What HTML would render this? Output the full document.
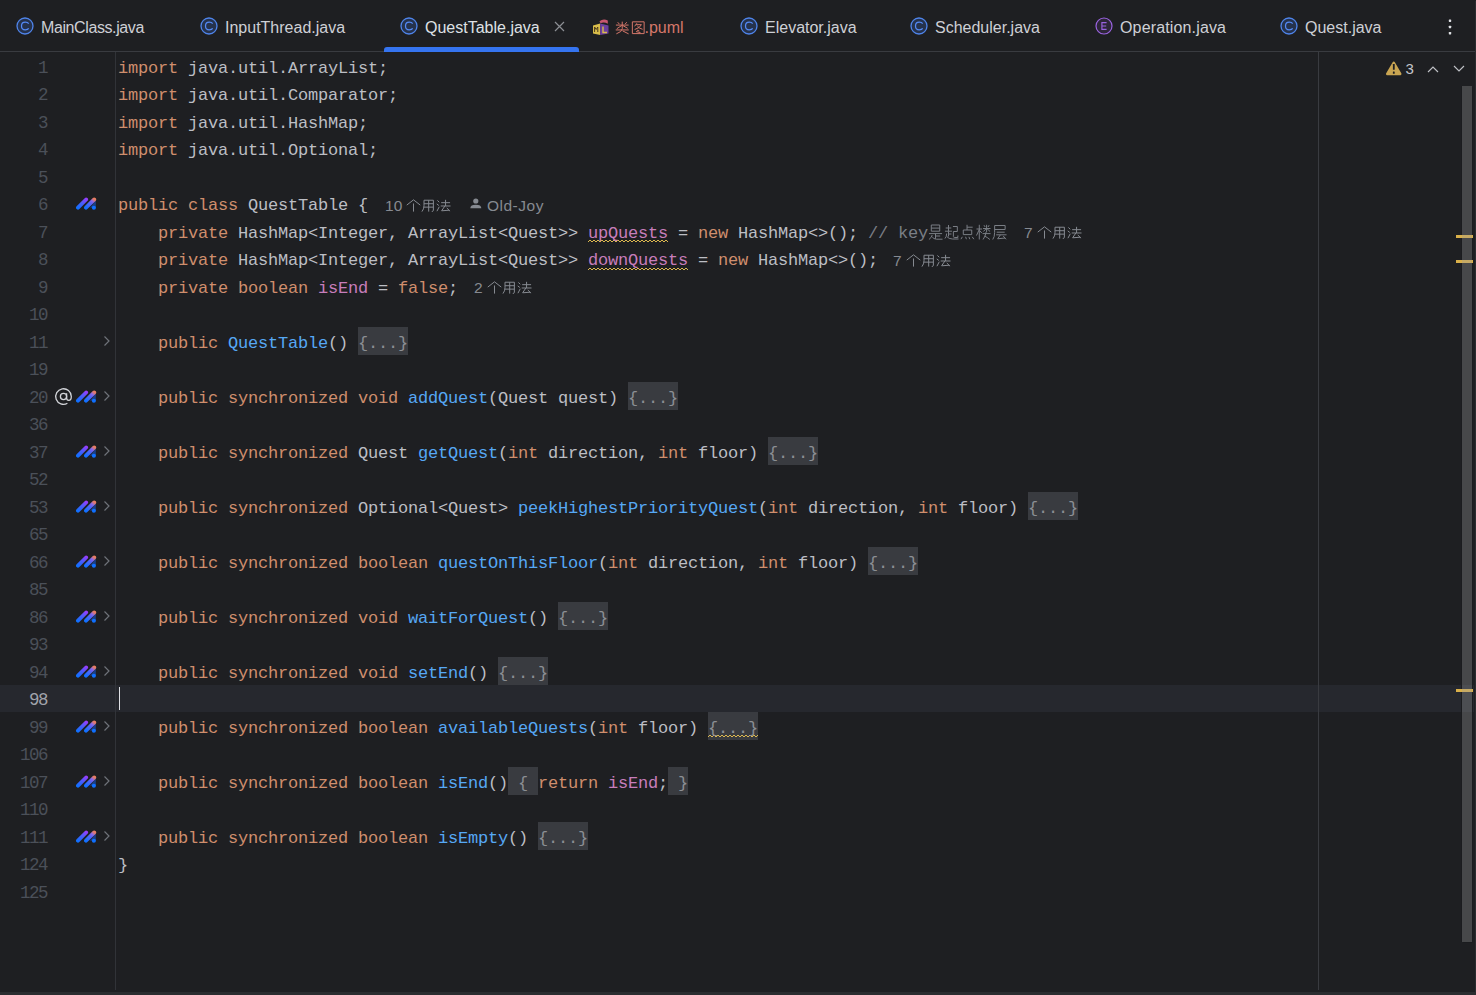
<!DOCTYPE html>
<html><head><meta charset="utf-8">
<style>
html,body{margin:0;padding:0;}
body{width:1476px;height:995px;overflow:hidden;background:#1e1f22;position:relative;font-family:"Liberation Sans",sans-serif;}
.tabs{position:absolute;left:0;top:0;width:1476px;height:51px;background:#1e1f22;}
.tabline{position:absolute;left:0;top:51px;width:1476px;height:1px;background:#393b40;}
.tab{position:absolute;top:17.5px;height:20px;font-size:16px;letter-spacing:0;line-height:20px;color:#ced0d6;white-space:nowrap;}
.tab.sel{color:#dfe1e5;}
.ic{position:absolute;top:17px;width:18px;height:18px;}
.uline{position:absolute;left:384px;top:47px;width:195px;height:5px;background:#3574f0;border-radius:3px 3px 0 0;}
.close{position:absolute;left:553.5px;top:20.7px;}
.kebab{position:absolute;left:1448px;top:18.5px;}
.gsep{position:absolute;left:115px;top:52px;width:1px;height:938px;background:#313338;}
.rmargin{position:absolute;left:1318px;top:52px;width:1px;height:938px;background:#393b40;}
.curline{position:absolute;left:0;top:684.5px;width:1474px;height:27.5px;background:#26282e;}
.ln{position:absolute;left:0;width:47px;height:27.5px;text-align:right;font-family:"Liberation Mono",monospace;font-size:17.5px;line-height:27.5px;color:#4b5059;margin-top:2.5px;}
.ln.cur{color:#a1a3ab;}
.ai{position:absolute;left:75px;}
.fa{position:absolute;left:103px;}
.at{position:absolute;left:54px;}
.code{position:absolute;left:118px;height:27.5px;white-space:pre;font-family:"Liberation Mono",monospace;font-size:17px;letter-spacing:-0.2px;line-height:27.5px;color:#bcbec4;margin-top:2.6px;}
.code i{font-style:normal;display:inline-block;width:10px;}
.ln i{font-style:normal;display:inline-block;width:9px;}
.fbox{position:absolute;height:27.5px;background:#393b40;}
.sq{position:absolute;}
.fd{color:#8c8f94;}
.k{color:#cf8e6d;}
.f{color:#56a8f5;}
.v{color:#c77dbb;}
.c{color:#7a7e85;}
.hint{position:absolute;font-size:15.5px;letter-spacing:0.2px;line-height:20px;margin-top:0.8px;color:#868a91;white-space:nowrap;}
.sbar{position:absolute;left:1462px;top:86px;width:10px;height:856px;background:rgba(158,158,160,0.32);}
.mark{position:absolute;left:1456px;width:17px;height:3px;background:#d9b04a;}
.bottom{position:absolute;left:0;top:992px;width:1476px;height:3px;background:#2b2d30;}
.redge{position:absolute;left:1475px;top:1px;width:1px;height:991px;background:#2b2d30;}
.caret{position:absolute;left:119px;top:687px;width:1px;height:23px;background:#dfe1e5;}
</style></head><body>
<svg width="0" height="0" style="position:absolute"><defs><linearGradient id="g1" gradientUnits="userSpaceOnUse" x1="3" y1="12.5" x2="11.2" y2="2"><stop offset="0" stop-color="#0f70ff"/><stop offset="0.5" stop-color="#4a5cfb"/><stop offset="1" stop-color="#9a3cfe"/></linearGradient><linearGradient id="g2" gradientUnits="userSpaceOnUse" x1="11" y1="12.5" x2="19.3" y2="2"><stop offset="0" stop-color="#0f70ff"/><stop offset="0.55" stop-color="#5f64f8"/><stop offset="0.72" stop-color="#8a6ae8"/><stop offset="0.86" stop-color="#d5787e"/><stop offset="1" stop-color="#ee7f5a"/></linearGradient></defs></svg>
<div class="tabs"></div>
<div class="tabline"></div>
<div class="uline"></div>

<!-- tab icons -->
<svg class="ic" style="left:16px" viewBox="0 0 18 18"><circle cx="9" cy="9" r="8" fill="#25324d" stroke="#4f84ea" stroke-width="1.3"/><path d="M12.7 6.6 C12 5.6 11 5.2 9.3 5.2 C7 5.2 5.5 6.8 5.5 9 C5.5 11.2 7 12.8 9.3 12.8 C11 12.8 12 12.4 12.7 11.4" fill="none" stroke="#548af7" stroke-width="1.25"/></svg>
<div class="tab" style="left:41px;letter-spacing:-0.4px">MainClass.java</div>
<svg class="ic" style="left:200px" viewBox="0 0 18 18"><circle cx="9" cy="9" r="8" fill="#25324d" stroke="#4f84ea" stroke-width="1.3"/><path d="M12.7 6.6 C12 5.6 11 5.2 9.3 5.2 C7 5.2 5.5 6.8 5.5 9 C5.5 11.2 7 12.8 9.3 12.8 C11 12.8 12 12.4 12.7 11.4" fill="none" stroke="#548af7" stroke-width="1.25"/></svg>
<div class="tab" style="left:225px">InputThread.java</div>
<svg class="ic" style="left:400px" viewBox="0 0 18 18"><circle cx="9" cy="9" r="8" fill="#25324d" stroke="#4f84ea" stroke-width="1.3"/><path d="M12.7 6.6 C12 5.6 11 5.2 9.3 5.2 C7 5.2 5.5 6.8 5.5 9 C5.5 11.2 7 12.8 9.3 12.8 C11 12.8 12 12.4 12.7 11.4" fill="none" stroke="#548af7" stroke-width="1.25"/></svg>
<div class="tab sel" style="left:425px">QuestTable.java</div>
<svg class="close" width="11" height="11" viewBox="0 0 11 11"><path d="M1 1 L10 10 M10 1 L1 10" stroke="#8c8f94" stroke-width="1.2"/></svg>
<svg class="ic" style="left:592px;top:18px" viewBox="0 0 18 18"><path d="M1 7.5 L8.2 5.5 L8.2 17 L1 15.5 Z" fill="#d9bd4a"/><path d="M8.2 5.5 L16.5 7.5 L16.5 15.5 L8.2 17 Z" fill="#6b3f9e"/><path d="M2.6 14 V9 L4.2 11.5 L5.8 9 V14" fill="none" stroke="#4a3a1a" stroke-width="1"/><path d="M11 8.5 V14.5 H15" fill="none" stroke="#d9bd4a" stroke-width="1.4"/><path d="M7.5 3.2 Q11.5 0.3 15.8 2.6 L15.8 5.8 Q12 3.3 8.5 5.2 Z" fill="#c8566e"/></svg>
<div class="tab" style="left:644.5px;color:#d5776a">.puml</div>
<svg class="ic" style="left:740px" viewBox="0 0 18 18"><circle cx="9" cy="9" r="8" fill="#25324d" stroke="#4f84ea" stroke-width="1.3"/><path d="M12.7 6.6 C12 5.6 11 5.2 9.3 5.2 C7 5.2 5.5 6.8 5.5 9 C5.5 11.2 7 12.8 9.3 12.8 C11 12.8 12 12.4 12.7 11.4" fill="none" stroke="#548af7" stroke-width="1.25"/></svg>
<div class="tab" style="left:765px">Elevator.java</div>
<svg class="ic" style="left:910px" viewBox="0 0 18 18"><circle cx="9" cy="9" r="8" fill="#25324d" stroke="#4f84ea" stroke-width="1.3"/><path d="M12.7 6.6 C12 5.6 11 5.2 9.3 5.2 C7 5.2 5.5 6.8 5.5 9 C5.5 11.2 7 12.8 9.3 12.8 C11 12.8 12 12.4 12.7 11.4" fill="none" stroke="#548af7" stroke-width="1.25"/></svg>
<div class="tab" style="left:935px">Scheduler.java</div>
<svg class="ic" style="left:1095px" viewBox="0 0 18 18"><circle cx="9" cy="9" r="8" fill="#2d2638" stroke="#9a63e0" stroke-width="1.2"/><path d="M11.6 5.6 L6.9 5.6 L6.9 12.4 L11.6 12.4 M6.9 9 L11.2 9" fill="none" stroke="#9a63e0" stroke-width="1.15"/></svg>
<div class="tab" style="left:1120px;letter-spacing:0.15px">Operation.java</div>
<svg class="ic" style="left:1280px" viewBox="0 0 18 18"><circle cx="9" cy="9" r="8" fill="#25324d" stroke="#4f84ea" stroke-width="1.3"/><path d="M12.7 6.6 C12 5.6 11 5.2 9.3 5.2 C7 5.2 5.5 6.8 5.5 9 C5.5 11.2 7 12.8 9.3 12.8 C11 12.8 12 12.4 12.7 11.4" fill="none" stroke="#548af7" stroke-width="1.25"/></svg>
<div class="tab" style="left:1305px">Quest.java</div>
<svg class="kebab" width="4" height="18" viewBox="0 0 4 18"><rect x="0.8" y="0.5" width="2.4" height="2.4" rx="0.6" fill="#dfe1e5"/><rect x="0.8" y="6.75" width="2.4" height="2.4" rx="0.6" fill="#dfe1e5"/><rect x="0.8" y="13" width="2.4" height="2.4" rx="0.6" fill="#dfe1e5"/></svg>

<div class="curline"></div>
<div class="gsep"></div>
<div class="rmargin"></div>
<div class="caret"></div>

<div class="ln" style="top:52.00px"><i>1</i></div>
<div class="code" style="top:52.00px"><span class="k"><i>i</i><i>m</i><i>p</i><i>o</i><i>r</i><i>t</i></span><span class="d"><i> </i><i>j</i><i>a</i><i>v</i><i>a</i><i>.</i><i>u</i><i>t</i><i>i</i><i>l</i><i>.</i><i>A</i><i>r</i><i>r</i><i>a</i><i>y</i><i>L</i><i>i</i><i>s</i><i>t</i><i>;</i></span></div>
<div class="ln" style="top:79.50px"><i>2</i></div>
<div class="code" style="top:79.50px"><span class="k"><i>i</i><i>m</i><i>p</i><i>o</i><i>r</i><i>t</i></span><span class="d"><i> </i><i>j</i><i>a</i><i>v</i><i>a</i><i>.</i><i>u</i><i>t</i><i>i</i><i>l</i><i>.</i><i>C</i><i>o</i><i>m</i><i>p</i><i>a</i><i>r</i><i>a</i><i>t</i><i>o</i><i>r</i><i>;</i></span></div>
<div class="ln" style="top:107.00px"><i>3</i></div>
<div class="code" style="top:107.00px"><span class="k"><i>i</i><i>m</i><i>p</i><i>o</i><i>r</i><i>t</i></span><span class="d"><i> </i><i>j</i><i>a</i><i>v</i><i>a</i><i>.</i><i>u</i><i>t</i><i>i</i><i>l</i><i>.</i><i>H</i><i>a</i><i>s</i><i>h</i><i>M</i><i>a</i><i>p</i><i>;</i></span></div>
<div class="ln" style="top:134.50px"><i>4</i></div>
<div class="code" style="top:134.50px"><span class="k"><i>i</i><i>m</i><i>p</i><i>o</i><i>r</i><i>t</i></span><span class="d"><i> </i><i>j</i><i>a</i><i>v</i><i>a</i><i>.</i><i>u</i><i>t</i><i>i</i><i>l</i><i>.</i><i>O</i><i>p</i><i>t</i><i>i</i><i>o</i><i>n</i><i>a</i><i>l</i><i>;</i></span></div>
<div class="ln" style="top:162.00px"><i>5</i></div>
<div class="code" style="top:162.00px"></div>
<div class="ln" style="top:189.50px"><i>6</i></div>
<svg class="ai" style="top:196.30px" width="22" height="14" viewBox="0 0 22 14"><path d="M20.9 4.4 L20.9 11.7 L15 11.7 Z" fill="#1b3f86"/><line x1="3" y1="11.7" x2="11.1" y2="3.5" stroke="url(#g1)" stroke-width="3.9" stroke-linecap="round"/><line x1="11" y1="11.7" x2="19.2" y2="3.5" stroke="url(#g2)" stroke-width="3.9" stroke-linecap="round"/><circle cx="18.9" cy="11.7" r="2.05" fill="#0f70ff"/></svg>
<div class="code" style="top:189.50px"><span class="k"><i>p</i><i>u</i><i>b</i><i>l</i><i>i</i><i>c</i><i> </i><i>c</i><i>l</i><i>a</i><i>s</i><i>s</i></span><span class="d"><i> </i><i>Q</i><i>u</i><i>e</i><i>s</i><i>t</i><i>T</i><i>a</i><i>b</i><i>l</i><i>e</i><i> </i><i>{</i></span></div>
<div class="ln" style="top:217.00px"><i>7</i></div>
<svg class="sq" style="left:588px;top:239.00px" width="80" height="4"><path d="M0 3 L2 1 L4 3 L6 1 L8 3 L10 1 L12 3 L14 1 L16 3 L18 1 L20 3 L22 1 L24 3 L26 1 L28 3 L30 1 L32 3 L34 1 L36 3 L38 1 L40 3 L42 1 L44 3 L46 1 L48 3 L50 1 L52 3 L54 1 L56 3 L58 1 L60 3 L62 1 L64 3 L66 1 L68 3 L70 1 L72 3 L74 1 L76 3 L78 1 L80 3" fill="none" stroke="#dcb850" stroke-width="1"/></svg>
<svg style="position:absolute;left:928.00px;top:224.00px;overflow:visible" width="79.00" height="16.00"><g fill="none" stroke="#7a7e85" stroke-width="1.0" stroke-linecap="butt"><path transform="translate(0.00 0) scale(0.9375 1.0000)" d="M3.5 1 H12.5 V7.2 H3.5 Z M3.5 4.1 H12.5 M1 9.6 H15 M8 9.6 V14.8 M8 12 H13 M4.5 11 Q3.5 14 1 15.5 M4.5 13 Q6 15 9 15.2 H15.5" vector-effect="non-scaling-stroke"/><path transform="translate(16.00 0) scale(0.9375 1.0000)" d="M1.8 4 H7.8 M4.8 1 V7 M1 7.2 H8.5 M4.8 7.2 V12.5 M4.8 10 H8 M2.8 9.5 Q2.8 13 1 14.5 M3 12.5 Q5 15 9 15 H15.5 M9.5 2.5 H14.2 V7.5 H10 V12.5 Q10 13.5 11.5 13.5 H14.8 V11.5" vector-effect="non-scaling-stroke"/><path transform="translate(32.00 0) scale(0.9375 1.0000)" d="M7.5 0.8 V6 M7.5 3.2 H13.5 M3.5 6 H12.5 V10.6 H3.5 Z M2.5 12.8 L1 15.2 M6 12.8 L6.8 15.2 M9.5 12.8 L10.5 15.2 M13 12.8 L14.8 15.2" vector-effect="non-scaling-stroke"/><path transform="translate(48.00 0) scale(0.9375 1.0000)" d="M0.5 5 H6.5 M3.5 0.8 V15.5 M3.5 5.5 L0.5 11.5 M3.8 6.5 L6.2 9 M8.5 1.2 L9.8 3 M14 1.2 L12.8 3 M7.5 4.5 H15.5 M11.3 0.8 V8 M11 4.5 L7.8 7.5 M11.6 4.5 L15 7.5 M7 9.6 H15.5 M10.8 8 Q10.3 12 7.5 15.5 M9 12 Q12.5 13.5 14.8 15.5" vector-effect="non-scaling-stroke"/><path transform="translate(64.00 0) scale(0.9375 1.0000)" d="M2.8 1.5 H14 V5.5 H2.8 M2.8 1.5 V8.5 Q2.8 13 0.8 15.5 M5 8.2 H13.5 M4.5 10.8 H15.5 M9 10.8 L6 14.8 L14 14 M12 12 L15 15.3" vector-effect="non-scaling-stroke"/></g></svg>
<div class="code" style="top:217.00px"><span class="d"><i> </i><i> </i><i> </i><i> </i></span><span class="k"><i>p</i><i>r</i><i>i</i><i>v</i><i>a</i><i>t</i><i>e</i></span><span class="d"><i> </i><i>H</i><i>a</i><i>s</i><i>h</i><i>M</i><i>a</i><i>p</i><i>&lt;</i><i>I</i><i>n</i><i>t</i><i>e</i><i>g</i><i>e</i><i>r</i><i>,</i><i> </i><i>A</i><i>r</i><i>r</i><i>a</i><i>y</i><i>L</i><i>i</i><i>s</i><i>t</i><i>&lt;</i><i>Q</i><i>u</i><i>e</i><i>s</i><i>t</i><i>&gt;</i><i>&gt;</i><i> </i></span><span class="v"><i>u</i><i>p</i><i>Q</i><i>u</i><i>e</i><i>s</i><i>t</i><i>s</i></span><span class="d"><i> </i><i>=</i><i> </i></span><span class="k"><i>n</i><i>e</i><i>w</i></span><span class="d"><i> </i><i>H</i><i>a</i><i>s</i><i>h</i><i>M</i><i>a</i><i>p</i><i>&lt;</i><i>&gt;</i><i>(</i><i>)</i><i>;</i><i> </i></span><span class="c"><i>/</i><i>/</i><i> </i><i>k</i><i>e</i><i>y</i></span></div>
<div class="ln" style="top:244.50px"><i>8</i></div>
<svg class="sq" style="left:588px;top:266.50px" width="100" height="4"><path d="M0 3 L2 1 L4 3 L6 1 L8 3 L10 1 L12 3 L14 1 L16 3 L18 1 L20 3 L22 1 L24 3 L26 1 L28 3 L30 1 L32 3 L34 1 L36 3 L38 1 L40 3 L42 1 L44 3 L46 1 L48 3 L50 1 L52 3 L54 1 L56 3 L58 1 L60 3 L62 1 L64 3 L66 1 L68 3 L70 1 L72 3 L74 1 L76 3 L78 1 L80 3 L82 1 L84 3 L86 1 L88 3 L90 1 L92 3 L94 1 L96 3 L98 1 L100 3" fill="none" stroke="#dcb850" stroke-width="1"/></svg>
<div class="code" style="top:244.50px"><span class="d"><i> </i><i> </i><i> </i><i> </i></span><span class="k"><i>p</i><i>r</i><i>i</i><i>v</i><i>a</i><i>t</i><i>e</i></span><span class="d"><i> </i><i>H</i><i>a</i><i>s</i><i>h</i><i>M</i><i>a</i><i>p</i><i>&lt;</i><i>I</i><i>n</i><i>t</i><i>e</i><i>g</i><i>e</i><i>r</i><i>,</i><i> </i><i>A</i><i>r</i><i>r</i><i>a</i><i>y</i><i>L</i><i>i</i><i>s</i><i>t</i><i>&lt;</i><i>Q</i><i>u</i><i>e</i><i>s</i><i>t</i><i>&gt;</i><i>&gt;</i><i> </i></span><span class="v"><i>d</i><i>o</i><i>w</i><i>n</i><i>Q</i><i>u</i><i>e</i><i>s</i><i>t</i><i>s</i></span><span class="d"><i> </i><i>=</i><i> </i></span><span class="k"><i>n</i><i>e</i><i>w</i></span><span class="d"><i> </i><i>H</i><i>a</i><i>s</i><i>h</i><i>M</i><i>a</i><i>p</i><i>&lt;</i><i>&gt;</i><i>(</i><i>)</i><i>;</i></span></div>
<div class="ln" style="top:272.00px"><i>9</i></div>
<div class="code" style="top:272.00px"><span class="d"><i> </i><i> </i><i> </i><i> </i></span><span class="k"><i>p</i><i>r</i><i>i</i><i>v</i><i>a</i><i>t</i><i>e</i><i> </i><i>b</i><i>o</i><i>o</i><i>l</i><i>e</i><i>a</i><i>n</i></span><span class="d"><i> </i></span><span class="v"><i>i</i><i>s</i><i>E</i><i>n</i><i>d</i></span><span class="d"><i> </i><i>=</i><i> </i></span><span class="k"><i>f</i><i>a</i><i>l</i><i>s</i><i>e</i></span><span class="d"><i>;</i></span></div>
<div class="ln" style="top:299.50px"><i>1</i><i>0</i></div>
<div class="code" style="top:299.50px"></div>
<div class="ln" style="top:327.00px"><i>1</i><i>1</i></div>
<svg class="fa" style="top:334.90px" width="8" height="12" viewBox="0 0 8 12"><path d="M1.5 1.5 L6 6 L1.5 10.5" fill="none" stroke="#6f737a" stroke-width="1.2"/></svg>
<div class="fbox" style="left:358px;top:327.00px;width:50px"></div>
<div class="code" style="top:327.00px"><span class="d"><i> </i><i> </i><i> </i><i> </i></span><span class="k"><i>p</i><i>u</i><i>b</i><i>l</i><i>i</i><i>c</i></span><span class="d"><i> </i></span><span class="f"><i>Q</i><i>u</i><i>e</i><i>s</i><i>t</i><i>T</i><i>a</i><i>b</i><i>l</i><i>e</i></span><span class="d"><i>(</i><i>)</i><i> </i></span><span class="fd"><i>{</i><i>.</i><i>.</i><i>.</i><i>}</i></span></div>
<div class="ln" style="top:354.50px"><i>1</i><i>9</i></div>
<div class="code" style="top:354.50px"></div>
<div class="ln" style="top:382.00px"><i>2</i><i>0</i></div>
<svg class="ai" style="top:388.80px" width="22" height="14" viewBox="0 0 22 14"><path d="M20.9 4.4 L20.9 11.7 L15 11.7 Z" fill="#1b3f86"/><line x1="3" y1="11.7" x2="11.1" y2="3.5" stroke="url(#g1)" stroke-width="3.9" stroke-linecap="round"/><line x1="11" y1="11.7" x2="19.2" y2="3.5" stroke="url(#g2)" stroke-width="3.9" stroke-linecap="round"/><circle cx="18.9" cy="11.7" r="2.05" fill="#0f70ff"/></svg>
<svg class="fa" style="top:389.90px" width="8" height="12" viewBox="0 0 8 12"><path d="M1.5 1.5 L6 6 L1.5 10.5" fill="none" stroke="#6f737a" stroke-width="1.2"/></svg>
<svg class="at" style="top:386.80px" width="20" height="20" viewBox="0 0 20 20"><circle cx="9.5" cy="9.5" r="3.1" fill="none" stroke="#d2d4d9" stroke-width="1.3"/><path d="M12.6 6.3 V11 C12.6 12.8 13.6 13.4 14.7 13.4 C16.5 13.4 17.3 11.7 17.3 9.5 A7.8 7.8 0 1 0 13.4 16.3" fill="none" stroke="#d2d4d9" stroke-width="1.3"/></svg>
<div class="fbox" style="left:628px;top:382.00px;width:50px"></div>
<div class="code" style="top:382.00px"><span class="d"><i> </i><i> </i><i> </i><i> </i></span><span class="k"><i>p</i><i>u</i><i>b</i><i>l</i><i>i</i><i>c</i><i> </i><i>s</i><i>y</i><i>n</i><i>c</i><i>h</i><i>r</i><i>o</i><i>n</i><i>i</i><i>z</i><i>e</i><i>d</i><i> </i><i>v</i><i>o</i><i>i</i><i>d</i></span><span class="d"><i> </i></span><span class="f"><i>a</i><i>d</i><i>d</i><i>Q</i><i>u</i><i>e</i><i>s</i><i>t</i></span><span class="d"><i>(</i><i>Q</i><i>u</i><i>e</i><i>s</i><i>t</i><i> </i><i>q</i><i>u</i><i>e</i><i>s</i><i>t</i><i>)</i><i> </i></span><span class="fd"><i>{</i><i>.</i><i>.</i><i>.</i><i>}</i></span></div>
<div class="ln" style="top:409.50px"><i>3</i><i>6</i></div>
<div class="code" style="top:409.50px"></div>
<div class="ln" style="top:437.00px"><i>3</i><i>7</i></div>
<svg class="ai" style="top:443.80px" width="22" height="14" viewBox="0 0 22 14"><path d="M20.9 4.4 L20.9 11.7 L15 11.7 Z" fill="#1b3f86"/><line x1="3" y1="11.7" x2="11.1" y2="3.5" stroke="url(#g1)" stroke-width="3.9" stroke-linecap="round"/><line x1="11" y1="11.7" x2="19.2" y2="3.5" stroke="url(#g2)" stroke-width="3.9" stroke-linecap="round"/><circle cx="18.9" cy="11.7" r="2.05" fill="#0f70ff"/></svg>
<svg class="fa" style="top:444.90px" width="8" height="12" viewBox="0 0 8 12"><path d="M1.5 1.5 L6 6 L1.5 10.5" fill="none" stroke="#6f737a" stroke-width="1.2"/></svg>
<div class="fbox" style="left:768px;top:437.00px;width:50px"></div>
<div class="code" style="top:437.00px"><span class="d"><i> </i><i> </i><i> </i><i> </i></span><span class="k"><i>p</i><i>u</i><i>b</i><i>l</i><i>i</i><i>c</i><i> </i><i>s</i><i>y</i><i>n</i><i>c</i><i>h</i><i>r</i><i>o</i><i>n</i><i>i</i><i>z</i><i>e</i><i>d</i></span><span class="d"><i> </i><i>Q</i><i>u</i><i>e</i><i>s</i><i>t</i><i> </i></span><span class="f"><i>g</i><i>e</i><i>t</i><i>Q</i><i>u</i><i>e</i><i>s</i><i>t</i></span><span class="d"><i>(</i></span><span class="k"><i>i</i><i>n</i><i>t</i></span><span class="d"><i> </i><i>d</i><i>i</i><i>r</i><i>e</i><i>c</i><i>t</i><i>i</i><i>o</i><i>n</i><i>,</i><i> </i></span><span class="k"><i>i</i><i>n</i><i>t</i></span><span class="d"><i> </i><i>f</i><i>l</i><i>o</i><i>o</i><i>r</i><i>)</i><i> </i></span><span class="fd"><i>{</i><i>.</i><i>.</i><i>.</i><i>}</i></span></div>
<div class="ln" style="top:464.50px"><i>5</i><i>2</i></div>
<div class="code" style="top:464.50px"></div>
<div class="ln" style="top:492.00px"><i>5</i><i>3</i></div>
<svg class="ai" style="top:498.80px" width="22" height="14" viewBox="0 0 22 14"><path d="M20.9 4.4 L20.9 11.7 L15 11.7 Z" fill="#1b3f86"/><line x1="3" y1="11.7" x2="11.1" y2="3.5" stroke="url(#g1)" stroke-width="3.9" stroke-linecap="round"/><line x1="11" y1="11.7" x2="19.2" y2="3.5" stroke="url(#g2)" stroke-width="3.9" stroke-linecap="round"/><circle cx="18.9" cy="11.7" r="2.05" fill="#0f70ff"/></svg>
<svg class="fa" style="top:499.90px" width="8" height="12" viewBox="0 0 8 12"><path d="M1.5 1.5 L6 6 L1.5 10.5" fill="none" stroke="#6f737a" stroke-width="1.2"/></svg>
<div class="fbox" style="left:1028px;top:492.00px;width:50px"></div>
<div class="code" style="top:492.00px"><span class="d"><i> </i><i> </i><i> </i><i> </i></span><span class="k"><i>p</i><i>u</i><i>b</i><i>l</i><i>i</i><i>c</i><i> </i><i>s</i><i>y</i><i>n</i><i>c</i><i>h</i><i>r</i><i>o</i><i>n</i><i>i</i><i>z</i><i>e</i><i>d</i></span><span class="d"><i> </i><i>O</i><i>p</i><i>t</i><i>i</i><i>o</i><i>n</i><i>a</i><i>l</i><i>&lt;</i><i>Q</i><i>u</i><i>e</i><i>s</i><i>t</i><i>&gt;</i><i> </i></span><span class="f"><i>p</i><i>e</i><i>e</i><i>k</i><i>H</i><i>i</i><i>g</i><i>h</i><i>e</i><i>s</i><i>t</i><i>P</i><i>r</i><i>i</i><i>o</i><i>r</i><i>i</i><i>t</i><i>y</i><i>Q</i><i>u</i><i>e</i><i>s</i><i>t</i></span><span class="d"><i>(</i></span><span class="k"><i>i</i><i>n</i><i>t</i></span><span class="d"><i> </i><i>d</i><i>i</i><i>r</i><i>e</i><i>c</i><i>t</i><i>i</i><i>o</i><i>n</i><i>,</i><i> </i></span><span class="k"><i>i</i><i>n</i><i>t</i></span><span class="d"><i> </i><i>f</i><i>l</i><i>o</i><i>o</i><i>r</i><i>)</i><i> </i></span><span class="fd"><i>{</i><i>.</i><i>.</i><i>.</i><i>}</i></span></div>
<div class="ln" style="top:519.50px"><i>6</i><i>5</i></div>
<div class="code" style="top:519.50px"></div>
<div class="ln" style="top:547.00px"><i>6</i><i>6</i></div>
<svg class="ai" style="top:553.80px" width="22" height="14" viewBox="0 0 22 14"><path d="M20.9 4.4 L20.9 11.7 L15 11.7 Z" fill="#1b3f86"/><line x1="3" y1="11.7" x2="11.1" y2="3.5" stroke="url(#g1)" stroke-width="3.9" stroke-linecap="round"/><line x1="11" y1="11.7" x2="19.2" y2="3.5" stroke="url(#g2)" stroke-width="3.9" stroke-linecap="round"/><circle cx="18.9" cy="11.7" r="2.05" fill="#0f70ff"/></svg>
<svg class="fa" style="top:554.90px" width="8" height="12" viewBox="0 0 8 12"><path d="M1.5 1.5 L6 6 L1.5 10.5" fill="none" stroke="#6f737a" stroke-width="1.2"/></svg>
<div class="fbox" style="left:868px;top:547.00px;width:50px"></div>
<div class="code" style="top:547.00px"><span class="d"><i> </i><i> </i><i> </i><i> </i></span><span class="k"><i>p</i><i>u</i><i>b</i><i>l</i><i>i</i><i>c</i><i> </i><i>s</i><i>y</i><i>n</i><i>c</i><i>h</i><i>r</i><i>o</i><i>n</i><i>i</i><i>z</i><i>e</i><i>d</i><i> </i><i>b</i><i>o</i><i>o</i><i>l</i><i>e</i><i>a</i><i>n</i></span><span class="d"><i> </i></span><span class="f"><i>q</i><i>u</i><i>e</i><i>s</i><i>t</i><i>O</i><i>n</i><i>T</i><i>h</i><i>i</i><i>s</i><i>F</i><i>l</i><i>o</i><i>o</i><i>r</i></span><span class="d"><i>(</i></span><span class="k"><i>i</i><i>n</i><i>t</i></span><span class="d"><i> </i><i>d</i><i>i</i><i>r</i><i>e</i><i>c</i><i>t</i><i>i</i><i>o</i><i>n</i><i>,</i><i> </i></span><span class="k"><i>i</i><i>n</i><i>t</i></span><span class="d"><i> </i><i>f</i><i>l</i><i>o</i><i>o</i><i>r</i><i>)</i><i> </i></span><span class="fd"><i>{</i><i>.</i><i>.</i><i>.</i><i>}</i></span></div>
<div class="ln" style="top:574.50px"><i>8</i><i>5</i></div>
<div class="code" style="top:574.50px"></div>
<div class="ln" style="top:602.00px"><i>8</i><i>6</i></div>
<svg class="ai" style="top:608.80px" width="22" height="14" viewBox="0 0 22 14"><path d="M20.9 4.4 L20.9 11.7 L15 11.7 Z" fill="#1b3f86"/><line x1="3" y1="11.7" x2="11.1" y2="3.5" stroke="url(#g1)" stroke-width="3.9" stroke-linecap="round"/><line x1="11" y1="11.7" x2="19.2" y2="3.5" stroke="url(#g2)" stroke-width="3.9" stroke-linecap="round"/><circle cx="18.9" cy="11.7" r="2.05" fill="#0f70ff"/></svg>
<svg class="fa" style="top:609.90px" width="8" height="12" viewBox="0 0 8 12"><path d="M1.5 1.5 L6 6 L1.5 10.5" fill="none" stroke="#6f737a" stroke-width="1.2"/></svg>
<div class="fbox" style="left:558px;top:602.00px;width:50px"></div>
<div class="code" style="top:602.00px"><span class="d"><i> </i><i> </i><i> </i><i> </i></span><span class="k"><i>p</i><i>u</i><i>b</i><i>l</i><i>i</i><i>c</i><i> </i><i>s</i><i>y</i><i>n</i><i>c</i><i>h</i><i>r</i><i>o</i><i>n</i><i>i</i><i>z</i><i>e</i><i>d</i><i> </i><i>v</i><i>o</i><i>i</i><i>d</i></span><span class="d"><i> </i></span><span class="f"><i>w</i><i>a</i><i>i</i><i>t</i><i>F</i><i>o</i><i>r</i><i>Q</i><i>u</i><i>e</i><i>s</i><i>t</i></span><span class="d"><i>(</i><i>)</i><i> </i></span><span class="fd"><i>{</i><i>.</i><i>.</i><i>.</i><i>}</i></span></div>
<div class="ln" style="top:629.50px"><i>9</i><i>3</i></div>
<div class="code" style="top:629.50px"></div>
<div class="ln" style="top:657.00px"><i>9</i><i>4</i></div>
<svg class="ai" style="top:663.80px" width="22" height="14" viewBox="0 0 22 14"><path d="M20.9 4.4 L20.9 11.7 L15 11.7 Z" fill="#1b3f86"/><line x1="3" y1="11.7" x2="11.1" y2="3.5" stroke="url(#g1)" stroke-width="3.9" stroke-linecap="round"/><line x1="11" y1="11.7" x2="19.2" y2="3.5" stroke="url(#g2)" stroke-width="3.9" stroke-linecap="round"/><circle cx="18.9" cy="11.7" r="2.05" fill="#0f70ff"/></svg>
<svg class="fa" style="top:664.90px" width="8" height="12" viewBox="0 0 8 12"><path d="M1.5 1.5 L6 6 L1.5 10.5" fill="none" stroke="#6f737a" stroke-width="1.2"/></svg>
<div class="fbox" style="left:498px;top:657.00px;width:50px"></div>
<div class="code" style="top:657.00px"><span class="d"><i> </i><i> </i><i> </i><i> </i></span><span class="k"><i>p</i><i>u</i><i>b</i><i>l</i><i>i</i><i>c</i><i> </i><i>s</i><i>y</i><i>n</i><i>c</i><i>h</i><i>r</i><i>o</i><i>n</i><i>i</i><i>z</i><i>e</i><i>d</i><i> </i><i>v</i><i>o</i><i>i</i><i>d</i></span><span class="d"><i> </i></span><span class="f"><i>s</i><i>e</i><i>t</i><i>E</i><i>n</i><i>d</i></span><span class="d"><i>(</i><i>)</i><i> </i></span><span class="fd"><i>{</i><i>.</i><i>.</i><i>.</i><i>}</i></span></div>
<div class="ln cur" style="top:684.50px"><i>9</i><i>8</i></div>
<div class="code" style="top:684.50px"></div>
<div class="ln" style="top:712.00px"><i>9</i><i>9</i></div>
<svg class="ai" style="top:718.80px" width="22" height="14" viewBox="0 0 22 14"><path d="M20.9 4.4 L20.9 11.7 L15 11.7 Z" fill="#1b3f86"/><line x1="3" y1="11.7" x2="11.1" y2="3.5" stroke="url(#g1)" stroke-width="3.9" stroke-linecap="round"/><line x1="11" y1="11.7" x2="19.2" y2="3.5" stroke="url(#g2)" stroke-width="3.9" stroke-linecap="round"/><circle cx="18.9" cy="11.7" r="2.05" fill="#0f70ff"/></svg>
<svg class="fa" style="top:719.90px" width="8" height="12" viewBox="0 0 8 12"><path d="M1.5 1.5 L6 6 L1.5 10.5" fill="none" stroke="#6f737a" stroke-width="1.2"/></svg>
<div class="fbox" style="left:708px;top:712.00px;width:50px"></div>
<svg class="sq" style="left:708px;top:734.00px" width="50" height="4"><path d="M0 3 L2 1 L4 3 L6 1 L8 3 L10 1 L12 3 L14 1 L16 3 L18 1 L20 3 L22 1 L24 3 L26 1 L28 3 L30 1 L32 3 L34 1 L36 3 L38 1 L40 3 L42 1 L44 3 L46 1 L48 3 L50 1" fill="none" stroke="#dcb850" stroke-width="1"/></svg>
<div class="code" style="top:712.00px"><span class="d"><i> </i><i> </i><i> </i><i> </i></span><span class="k"><i>p</i><i>u</i><i>b</i><i>l</i><i>i</i><i>c</i><i> </i><i>s</i><i>y</i><i>n</i><i>c</i><i>h</i><i>r</i><i>o</i><i>n</i><i>i</i><i>z</i><i>e</i><i>d</i><i> </i><i>b</i><i>o</i><i>o</i><i>l</i><i>e</i><i>a</i><i>n</i></span><span class="d"><i> </i></span><span class="f"><i>a</i><i>v</i><i>a</i><i>i</i><i>l</i><i>a</i><i>b</i><i>l</i><i>e</i><i>Q</i><i>u</i><i>e</i><i>s</i><i>t</i><i>s</i></span><span class="d"><i>(</i></span><span class="k"><i>i</i><i>n</i><i>t</i></span><span class="d"><i> </i><i>f</i><i>l</i><i>o</i><i>o</i><i>r</i><i>)</i><i> </i></span><span class="fd"><i>{</i><i>.</i><i>.</i><i>.</i><i>}</i></span></div>
<div class="ln" style="top:739.50px"><i>1</i><i>0</i><i>6</i></div>
<div class="code" style="top:739.50px"></div>
<div class="ln" style="top:767.00px"><i>1</i><i>0</i><i>7</i></div>
<svg class="ai" style="top:773.80px" width="22" height="14" viewBox="0 0 22 14"><path d="M20.9 4.4 L20.9 11.7 L15 11.7 Z" fill="#1b3f86"/><line x1="3" y1="11.7" x2="11.1" y2="3.5" stroke="url(#g1)" stroke-width="3.9" stroke-linecap="round"/><line x1="11" y1="11.7" x2="19.2" y2="3.5" stroke="url(#g2)" stroke-width="3.9" stroke-linecap="round"/><circle cx="18.9" cy="11.7" r="2.05" fill="#0f70ff"/></svg>
<svg class="fa" style="top:774.90px" width="8" height="12" viewBox="0 0 8 12"><path d="M1.5 1.5 L6 6 L1.5 10.5" fill="none" stroke="#6f737a" stroke-width="1.2"/></svg>
<div class="fbox" style="left:508px;top:767.00px;width:30px"></div>
<div class="fbox" style="left:668px;top:767.00px;width:20px"></div>
<div class="code" style="top:767.00px"><span class="d"><i> </i><i> </i><i> </i><i> </i></span><span class="k"><i>p</i><i>u</i><i>b</i><i>l</i><i>i</i><i>c</i><i> </i><i>s</i><i>y</i><i>n</i><i>c</i><i>h</i><i>r</i><i>o</i><i>n</i><i>i</i><i>z</i><i>e</i><i>d</i><i> </i><i>b</i><i>o</i><i>o</i><i>l</i><i>e</i><i>a</i><i>n</i></span><span class="d"><i> </i></span><span class="f"><i>i</i><i>s</i><i>E</i><i>n</i><i>d</i></span><span class="d"><i>(</i><i>)</i></span><span class="fd"><i> </i><i>{</i><i> </i></span><span class="k"><i>r</i><i>e</i><i>t</i><i>u</i><i>r</i><i>n</i></span><span class="d"><i> </i></span><span class="v"><i>i</i><i>s</i><i>E</i><i>n</i><i>d</i></span><span class="d"><i>;</i></span><span class="fd"><i> </i><i>}</i></span></div>
<div class="ln" style="top:794.50px"><i>1</i><i>1</i><i>0</i></div>
<div class="code" style="top:794.50px"></div>
<div class="ln" style="top:822.00px"><i>1</i><i>1</i><i>1</i></div>
<svg class="ai" style="top:828.80px" width="22" height="14" viewBox="0 0 22 14"><path d="M20.9 4.4 L20.9 11.7 L15 11.7 Z" fill="#1b3f86"/><line x1="3" y1="11.7" x2="11.1" y2="3.5" stroke="url(#g1)" stroke-width="3.9" stroke-linecap="round"/><line x1="11" y1="11.7" x2="19.2" y2="3.5" stroke="url(#g2)" stroke-width="3.9" stroke-linecap="round"/><circle cx="18.9" cy="11.7" r="2.05" fill="#0f70ff"/></svg>
<svg class="fa" style="top:829.90px" width="8" height="12" viewBox="0 0 8 12"><path d="M1.5 1.5 L6 6 L1.5 10.5" fill="none" stroke="#6f737a" stroke-width="1.2"/></svg>
<div class="fbox" style="left:538px;top:822.00px;width:50px"></div>
<div class="code" style="top:822.00px"><span class="d"><i> </i><i> </i><i> </i><i> </i></span><span class="k"><i>p</i><i>u</i><i>b</i><i>l</i><i>i</i><i>c</i><i> </i><i>s</i><i>y</i><i>n</i><i>c</i><i>h</i><i>r</i><i>o</i><i>n</i><i>i</i><i>z</i><i>e</i><i>d</i><i> </i><i>b</i><i>o</i><i>o</i><i>l</i><i>e</i><i>a</i><i>n</i></span><span class="d"><i> </i></span><span class="f"><i>i</i><i>s</i><i>E</i><i>m</i><i>p</i><i>t</i><i>y</i></span><span class="d"><i>(</i><i>)</i><i> </i></span><span class="fd"><i>{</i><i>.</i><i>.</i><i>.</i><i>}</i></span></div>
<div class="ln" style="top:849.50px"><i>1</i><i>2</i><i>4</i></div>
<div class="code" style="top:849.50px"><span class="d"><i>}</i></span></div>
<div class="ln" style="top:877.00px"><i>1</i><i>2</i><i>5</i></div>
<div class="code" style="top:877.00px"></div>
<svg style="position:absolute;left:406.00px;top:198.50px;overflow:visible" width="45.00" height="13.00"><g fill="none" stroke="#868a91" stroke-width="1.0" stroke-linecap="butt"><path transform="translate(0.00 0) scale(0.9375 0.8125)" d="M8 1 L0.8 7.5 M8 1 L15.2 7.5 M8 5.5 V15.5" vector-effect="non-scaling-stroke"/><path transform="translate(15.00 0) scale(0.9375 0.8125)" d="M3.2 1.5 H13.2 V14 Q13.2 15.3 11.5 15.3 M3.2 1.5 V8 Q3.2 12.5 1 15.5 M8.2 1.5 V15.5 M3.2 5.8 H13.2 M3.2 10 H13.2" vector-effect="non-scaling-stroke"/><path transform="translate(30.00 0) scale(0.9375 0.8125)" d="M1.5 1.8 L3.5 4 M0.8 6 L3 8 M1 15 L3.5 9.5 M5.5 4.5 H15 M5 8.6 H15.5 M10.2 1 V8.6 M9.5 8.6 L6 14.5 L14 13.8 M11.5 11 L15 15" vector-effect="non-scaling-stroke"/></g></svg>
<svg style="position:absolute;left:1037.00px;top:226.00px;overflow:visible" width="45.00" height="13.00"><g fill="none" stroke="#868a91" stroke-width="1.0" stroke-linecap="butt"><path transform="translate(0.00 0) scale(0.9375 0.8125)" d="M8 1 L0.8 7.5 M8 1 L15.2 7.5 M8 5.5 V15.5" vector-effect="non-scaling-stroke"/><path transform="translate(15.00 0) scale(0.9375 0.8125)" d="M3.2 1.5 H13.2 V14 Q13.2 15.3 11.5 15.3 M3.2 1.5 V8 Q3.2 12.5 1 15.5 M8.2 1.5 V15.5 M3.2 5.8 H13.2 M3.2 10 H13.2" vector-effect="non-scaling-stroke"/><path transform="translate(30.00 0) scale(0.9375 0.8125)" d="M1.5 1.8 L3.5 4 M0.8 6 L3 8 M1 15 L3.5 9.5 M5.5 4.5 H15 M5 8.6 H15.5 M10.2 1 V8.6 M9.5 8.6 L6 14.5 L14 13.8 M11.5 11 L15 15" vector-effect="non-scaling-stroke"/></g></svg>
<svg style="position:absolute;left:906.00px;top:253.50px;overflow:visible" width="45.00" height="13.00"><g fill="none" stroke="#868a91" stroke-width="1.0" stroke-linecap="butt"><path transform="translate(0.00 0) scale(0.9375 0.8125)" d="M8 1 L0.8 7.5 M8 1 L15.2 7.5 M8 5.5 V15.5" vector-effect="non-scaling-stroke"/><path transform="translate(15.00 0) scale(0.9375 0.8125)" d="M3.2 1.5 H13.2 V14 Q13.2 15.3 11.5 15.3 M3.2 1.5 V8 Q3.2 12.5 1 15.5 M8.2 1.5 V15.5 M3.2 5.8 H13.2 M3.2 10 H13.2" vector-effect="non-scaling-stroke"/><path transform="translate(30.00 0) scale(0.9375 0.8125)" d="M1.5 1.8 L3.5 4 M0.8 6 L3 8 M1 15 L3.5 9.5 M5.5 4.5 H15 M5 8.6 H15.5 M10.2 1 V8.6 M9.5 8.6 L6 14.5 L14 13.8 M11.5 11 L15 15" vector-effect="non-scaling-stroke"/></g></svg>
<svg style="position:absolute;left:487.00px;top:281.00px;overflow:visible" width="45.00" height="13.00"><g fill="none" stroke="#868a91" stroke-width="1.0" stroke-linecap="butt"><path transform="translate(0.00 0) scale(0.9375 0.8125)" d="M8 1 L0.8 7.5 M8 1 L15.2 7.5 M8 5.5 V15.5" vector-effect="non-scaling-stroke"/><path transform="translate(15.00 0) scale(0.9375 0.8125)" d="M3.2 1.5 H13.2 V14 Q13.2 15.3 11.5 15.3 M3.2 1.5 V8 Q3.2 12.5 1 15.5 M8.2 1.5 V15.5 M3.2 5.8 H13.2 M3.2 10 H13.2" vector-effect="non-scaling-stroke"/><path transform="translate(30.00 0) scale(0.9375 0.8125)" d="M1.5 1.8 L3.5 4 M0.8 6 L3 8 M1 15 L3.5 9.5 M5.5 4.5 H15 M5 8.6 H15.5 M10.2 1 V8.6 M9.5 8.6 L6 14.5 L14 13.8 M11.5 11 L15 15" vector-effect="non-scaling-stroke"/></g></svg>
<svg style="position:absolute;left:614.80px;top:21.00px;overflow:visible" width="30.50" height="13.00"><g fill="none" stroke="#d5776a" stroke-width="1.0" stroke-linecap="butt"><path transform="translate(0.00 0) scale(0.9062 0.8125)" d="M3 1.5 L4.8 3.8 M13 1.5 L11.2 3.8 M1 5 H15 M8 0.8 V9 M7.5 5.5 L2 9.5 M8.5 5.5 L14 9 M0.8 11 H15.2 M8.2 9 Q7.8 13.5 1.5 15.8 M8.5 12.2 L15 15.8" vector-effect="non-scaling-stroke"/><path transform="translate(16.00 0) scale(0.9062 0.8125)" d="M1.5 1 H14.5 V15.5 H1.5 Z M6.5 2.8 L4 6.5 M5.5 4.5 H11.5 Q10 8.5 4 10.5 M7 6.2 Q9 9.2 12.8 10.2 M6.5 11.2 L9.2 12.2 M5.5 13 L10.5 14.3" vector-effect="non-scaling-stroke"/></g></svg>

<!-- inlay hints -->
<div class="hint" style="left:385px;top:195px">10 </div>
<svg style="position:absolute;left:470px;top:198px" width="12" height="12" viewBox="0 0 12 12"><circle cx="5.8" cy="3" r="2.6" fill="#868a91"/><path d="M0.3 10.2 Q0.3 6.8 5.8 6.8 Q11.3 6.8 11.3 10.2 Z" fill="#868a91"/></svg>
<div class="hint" style="left:487px;top:195px;letter-spacing:0.5px">Old-Joy</div>
<div class="hint" style="left:1024px;top:222px">7 </div>
<div class="hint" style="left:893px;top:250px">7 </div>
<div class="hint" style="left:474px;top:277px">2 </div>

<!-- right panel -->
<svg style="position:absolute;left:1386px;top:61px" width="16" height="15" viewBox="0 0 16 15"><path d="M7.75 1.9 L14.2 12.9 L1.3 12.9 Z" fill="#c9a552" stroke="#c9a552" stroke-width="2.6" stroke-linejoin="round"/><rect x="6.9" y="3.1" width="1.8" height="5.6" rx="0.3" fill="#1e1f22"/><rect x="6.9" y="10.6" width="1.8" height="2.2" rx="0.3" fill="#1e1f22"/></svg>
<div style="position:absolute;left:1405.5px;top:59px;font-size:15px;line-height:20px;color:#c4c6cb">3</div>
<svg style="position:absolute;left:1427px;top:65px" width="12" height="8" viewBox="0 0 12 8"><path d="M1 7 L6 2 L11 7" fill="none" stroke="#bfc1c6" stroke-width="1.15"/></svg>
<svg style="position:absolute;left:1453px;top:65px" width="12" height="8" viewBox="0 0 12 8"><path d="M1 1 L6 6 L11 1" fill="none" stroke="#bfc1c6" stroke-width="1.15"/></svg>
<div style="position:absolute;left:1472px;top:87px;width:1px;height:856px;background:#1b1c1f"></div><div style="position:absolute;left:1461px;top:86px;width:1px;height:856px;background:#1b1c1f"></div><div style="position:absolute;left:1463px;top:942px;width:10px;height:1px;background:#1b1c1f"></div>
<div class="mark" style="top:234.8px"></div>
<div class="mark" style="top:259.8px"></div>
<div class="mark" style="top:688.8px"></div>
<div class="sbar"></div>
<div class="bottom"></div>
<div class="redge"></div>
</body></html>
